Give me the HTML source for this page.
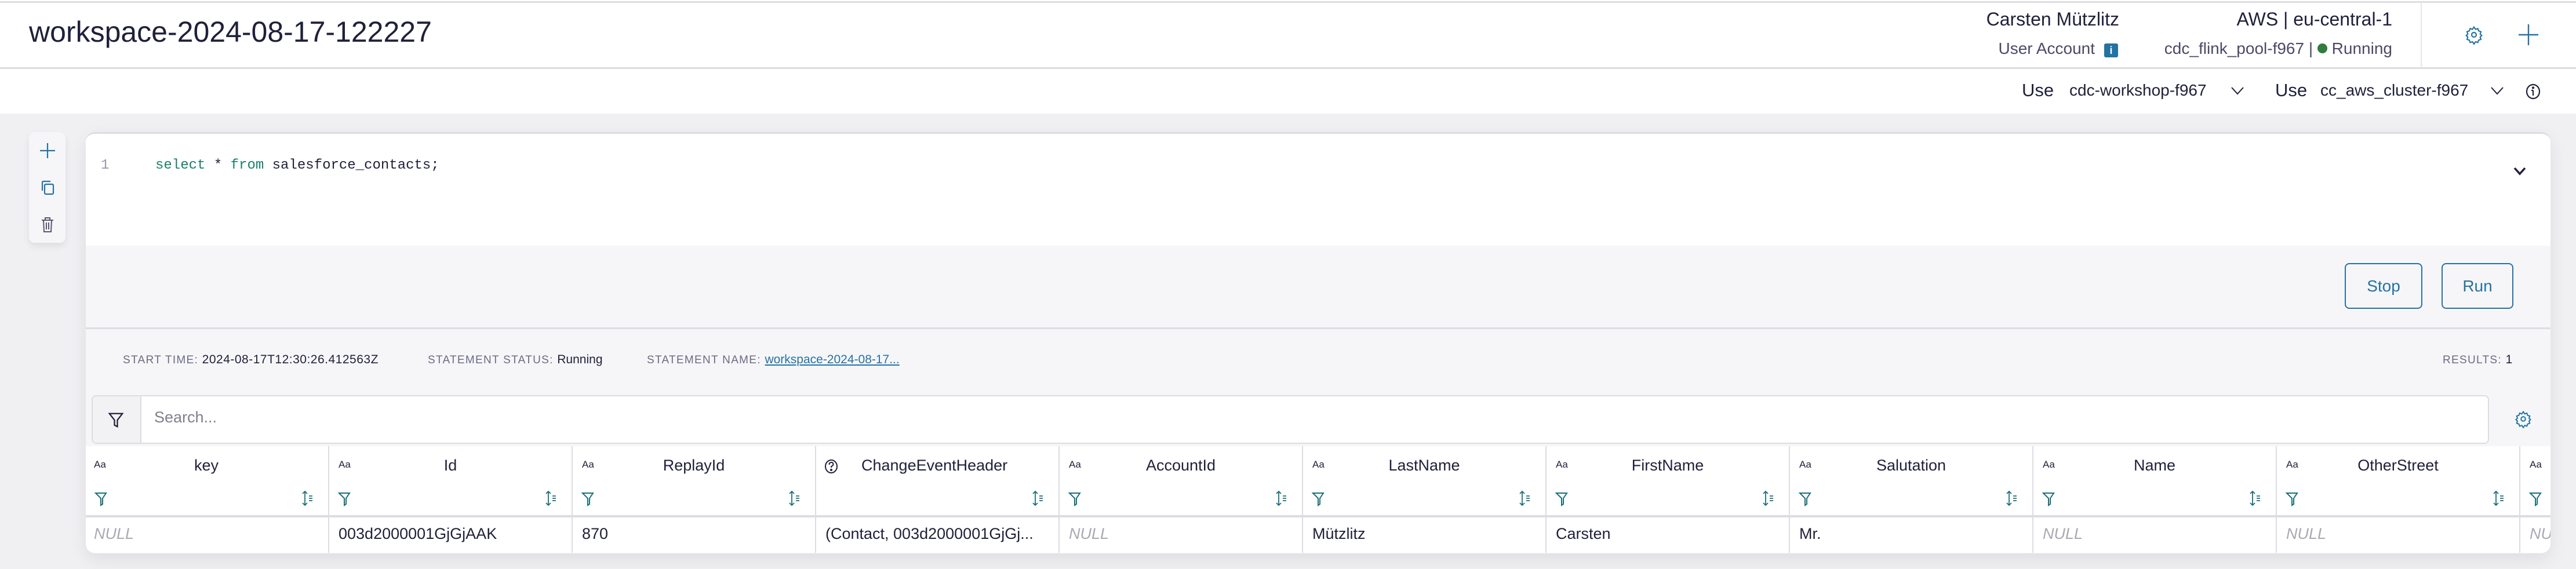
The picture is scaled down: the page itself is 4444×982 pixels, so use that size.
<!DOCTYPE html>
<html><head><meta charset="utf-8"><style>
*{margin:0;padding:0;box-sizing:border-box}
body{width:4444px;height:982px;background:#f0f0f3;font-family:"Liberation Sans",sans-serif;color:#1f2039;position:relative;overflow:hidden}
.a{position:absolute;white-space:nowrap}
.top{position:absolute;left:0;top:0;width:4444px;height:196px;background:#fff}
.cap{font-size:19px;letter-spacing:1.3px;color:#6b6b84;text-transform:uppercase}
.col{position:absolute;top:770px;height:184px;width:420px;border-left:2px solid #dcdce2}
.col .aa{position:absolute;left:16px;top:22px;font-size:17px;color:#1f2039}
.col .h{position:absolute;left:0;right:0;top:18px;text-align:center;font-size:27px}
.col .v{position:absolute;left:16px;top:136px;font-size:27px}
.col .n{color:#a9a9b4;font-style:italic}
</style></head><body>
<div class="top"></div>
<div class="a" style="left:0;top:2px;width:4444px;height:3px;background:#dcdce2"></div>
<div class="a" style="left:0;top:116px;width:4444px;height:3px;background:#dcdce2"></div>
<div class="a" style="left:4176px;top:4px;width:2px;height:113px;background:#e6e6ea"></div>
<div class="a" style="left:50px;top:26px;font-size:50px;color:#1f2039">workspace-2024-08-17-122227</div>
<div class="a" style="right:788px;top:15px;font-size:32px">Carsten Mützlitz</div>
<div class="a" style="right:317px;top:15px;font-size:32px">AWS | eu-central-1</div>
<div class="a" style="right:830px;top:68px;font-size:28px;color:#4a4a66">User Account</div>
<div class="a" style="left:3630px;top:75px;width:24px;height:24px;background:#2472a4;border-radius:3px;color:#fff;font-size:18px;text-align:center;line-height:24px;font-weight:bold">i</div>
<div class="a" style="right:317px;top:68px;font-size:28px;color:#4a4a66">cdc_flink_pool-f967 | <span style="display:inline-block;width:17px;height:17px;border-radius:50%;background:#2e7d3c;vertical-align:1px"></span> Running</div>
<svg class="a" style="left:4252px;top:42px" width="32" height="36" viewBox="0 0 24 24" fill="none" stroke="#2472a4" stroke-width="1.6"><circle cx="12" cy="12" r="3"/><path d="M12 2l2 3 3-1 1 3 3 1-1 3 2 2-2 2 1 3-3 1-1 3-3-1-2 3-2-3-3 1-1-3-3-1 1-3-2-2 2-2-1-3 3-1 1-3 3 1z"/></svg>
<svg class="a" style="left:4343px;top:40px" width="38" height="40" viewBox="0 0 38 40" stroke="#2472a4" stroke-width="2.4"><path d="M19 2v36M2 20h34"/></svg>
<div class="a" style="left:3488px;top:138px;font-size:31px">Use</div>
<div class="a" style="left:3570px;top:140px;font-size:28px">cdc-workshop-f967</div>
<svg class="a" style="left:3848px;top:148px" width="24" height="16" stroke="#1f2039" stroke-width="2" fill="none"><path d="M2 3l10 11 10-11"/></svg>
<div class="a" style="left:3925px;top:138px;font-size:31px">Use</div>
<div class="a" style="left:4003px;top:140px;font-size:28px">cc_aws_cluster-f967</div>
<svg class="a" style="left:4296px;top:148px" width="24" height="16" stroke="#1f2039" stroke-width="2" fill="none"><path d="M2 3l10 11 10-11"/></svg>
<svg class="a" style="left:4357px;top:144px" width="26" height="28" viewBox="0 0 26 28" stroke="#1f2039" stroke-width="2.2" fill="none"><ellipse cx="13" cy="14" rx="11" ry="12"/><path d="M13 12v9M10 12h3"/><circle cx="13" cy="7.5" r="1" fill="#1f2039"/></svg>

<div class="a" style="left:50px;top:228px;width:63px;height:191px;background:#f6f6f8;border-radius:10px;box-shadow:0 6px 12px rgba(0,0,0,.08)"></div>
<svg class="a" style="left:68px;top:246px" width="28" height="28" stroke="#2472a4" stroke-width="2.2"><path d="M14 1v26M1 14h26"/></svg>
<svg class="a" style="left:70px;top:311px" width="24" height="26" stroke="#2472a4" stroke-width="2.2" fill="none"><rect x="7" y="7" width="15" height="17" rx="2"/><path d="M3 18V4q0-2 2-2h12"/></svg>
<svg class="a" style="left:70px;top:374px" width="24" height="28" stroke="#555870" stroke-width="2" fill="none"><path d="M2 6h20M8 6V2h8v4M5 6l1 20h12l1-20M10 10v12M14 10v12"/></svg>

<div class="a" style="left:148px;top:228px;width:4252px;height:727px;background:#f6f6f8;border-radius:16px;border-top:3px solid #dcdce2;box-shadow:0 10px 30px rgba(0,0,0,.08);overflow:hidden">
<div style="position:absolute;left:0;top:0;width:100%;height:193px;background:#fff"></div>
</div>
<div class="a" style="left:174px;top:272px;font-family:'Liberation Mono',monospace;font-size:24px;color:#9a9aa8">1</div>
<div class="a" style="left:268px;top:272px;font-family:'Liberation Mono',monospace;font-size:24px;color:#1f2039"><span style="color:#1a7f6a">select</span> * <span style="color:#1a7f6a">from</span> salesforce_contacts;</div>
<svg class="a" style="left:4336px;top:287px" width="22" height="16" stroke="#1f2039" stroke-width="3.5" fill="none"><path d="M2 3l9 10 9-10"/></svg>
<div class="a" style="left:4045px;top:454px;width:134px;height:79px;border:2px solid #2472a4;border-radius:8px;color:#2472a4;font-size:28px;text-align:center;line-height:75px">Stop</div>
<div class="a" style="left:4212px;top:454px;width:124px;height:79px;border:2px solid #2472a4;border-radius:8px;color:#2472a4;font-size:28px;text-align:center;line-height:75px">Run</div>
<div class="a" style="left:148px;top:565px;width:4252px;height:3px;background:#dcdce2"></div>
<div class="a cap" style="left:212px;top:609px">Start time: <span style="color:#1f2039;letter-spacing:0.5px;font-size:21px">2024-08-17T12:30:26.412563Z</span></div>
<div class="a cap" style="left:738px;top:609px">Statement status: <span style="color:#1f2039;letter-spacing:0;text-transform:none;font-size:21px">Running</span></div>
<div class="a cap" style="left:1116px;top:609px">Statement name: <span style="color:#2472a4;letter-spacing:0;text-transform:none;text-decoration:underline;font-size:21px">workspace-2024-08-17...</span></div>
<div class="a cap" style="left:4214px;top:609px">Results: <span style="color:#1f2039;font-size:21px">1</span></div>

<div class="a" style="left:158px;top:682px;width:4136px;height:84px;background:#fff;border:2px solid #dcdce2;border-radius:8px;overflow:hidden">
<div style="position:absolute;left:0;top:0;width:84px;height:84px;background:#f2f2f4;border-right:2px solid #dcdce2"></div>
</div>
<svg class="a" style="left:185px;top:710px" width="30" height="30" viewBox="0 0 24 24" fill="none" stroke="#1f2039" stroke-width="1.8"><path d="M3 3h18l-7 9v9l-4-2v-7z"/></svg>
<div class="a" style="left:266px;top:705px;font-size:27px;color:#80808e">Search...</div>
<svg class="a" style="left:4338px;top:706px" width="30" height="34" viewBox="0 0 24 24" fill="none" stroke="#2472a4" stroke-width="1.6"><circle cx="12" cy="12" r="3"/><path d="M12 2l2 3 3-1 1 3 3 1-1 3 2 2-2 2 1 3-3 1-1 3-3-1-2 3-2-3-3 1-1-3-3-1 1-3-2-2 2-2-1-3 3-1 1-3 3 1z"/></svg>

<div class="a" style="left:148px;top:770px;width:4252px;height:184px;background:#fff;border-radius:0 0 16px 16px;overflow:hidden">
<div style="position:absolute;left:0;top:119px;width:100%;height:4px;background:#dcdce2"></div>
</div>

<div class="a" style="left:0;top:0;width:4400px;height:982px;overflow:hidden;pointer-events:none">
<div class="col" style="left:146px;border-left:none"><span class="aa">Aa</span><div class="h">key</div><div class="v n">NULL</div></div>
<div class="col" style="left:566px"><span class="aa">Aa</span><div class="h">Id</div><div class="v">003d2000001GjGjAAK</div></div>
<div class="col" style="left:986px"><span class="aa">Aa</span><div class="h">ReplayId</div><div class="v">870</div></div>
<div class="col" style="left:1406px"><svg style="position:absolute;left:14px;top:22px" width="24" height="26" viewBox="0 0 24 26" fill="none" stroke="#1f2039" stroke-width="2"><ellipse cx="12" cy="13" rx="10" ry="11"/><path d="M8.5 10q0-4 3.5-4t3.5 3.5q0 2-3.5 3.5v2"/><circle cx="12" cy="19" r="1" fill="#1f2039"/></svg><div class="h" style="text-align:left;left:78px">ChangeEventHeader</div><div class="v">(Contact, 003d2000001GjGj...</div></div>
<div class="col" style="left:1826px"><span class="aa">Aa</span><div class="h">AccountId</div><div class="v n">NULL</div></div>
<div class="col" style="left:2246px"><span class="aa">Aa</span><div class="h">LastName</div><div class="v">Mützlitz</div></div>
<div class="col" style="left:2666px"><span class="aa">Aa</span><div class="h">FirstName</div><div class="v">Carsten</div></div>
<div class="col" style="left:3086px"><span class="aa">Aa</span><div class="h">Salutation</div><div class="v">Mr.</div></div>
<div class="col" style="left:3506px"><span class="aa">Aa</span><div class="h">Name</div><div class="v n">NULL</div></div>
<div class="col" style="left:3926px"><span class="aa">Aa</span><div class="h">OtherStreet</div><div class="v n">NULL</div></div>
<div class="col" style="left:4346px"><span class="aa">Aa</span><div class="v n">NULL</div></div>
</div>
<svg class="a" style="left:0;top:0" width="4400" height="982">
<defs>
<g id="f"><path d="M0 0h18l-6 9v10l-3 2V9z" fill="none" stroke="#1a6f78" stroke-width="2"/></g>
<g id="s" fill="none" stroke="#1a6f78" stroke-width="1.8"><path d="M4 0v24M0 4l4-4 4 4M0 20l4 4 4-4M11 8h6M11 12h6M11 16h6"/></g>
</defs>
<use href="#f" x="165" y="851"/><use href="#s" x="522" y="848"/>
<use href="#f" x="585" y="851"/><use href="#s" x="942" y="848"/>
<use href="#f" x="1005" y="851"/><use href="#s" x="1362" y="848"/>
<use href="#s" x="1782" y="848"/>
<use href="#f" x="1845" y="851"/><use href="#s" x="2202" y="848"/>
<use href="#f" x="2265" y="851"/><use href="#s" x="2622" y="848"/>
<use href="#f" x="2685" y="851"/><use href="#s" x="3042" y="848"/>
<use href="#f" x="3105" y="851"/><use href="#s" x="3462" y="848"/>
<use href="#f" x="3525" y="851"/><use href="#s" x="3882" y="848"/>
<use href="#f" x="3945" y="851"/><use href="#s" x="4302" y="848"/>
<use href="#f" x="4365" y="851"/>
</svg>
</body></html>
